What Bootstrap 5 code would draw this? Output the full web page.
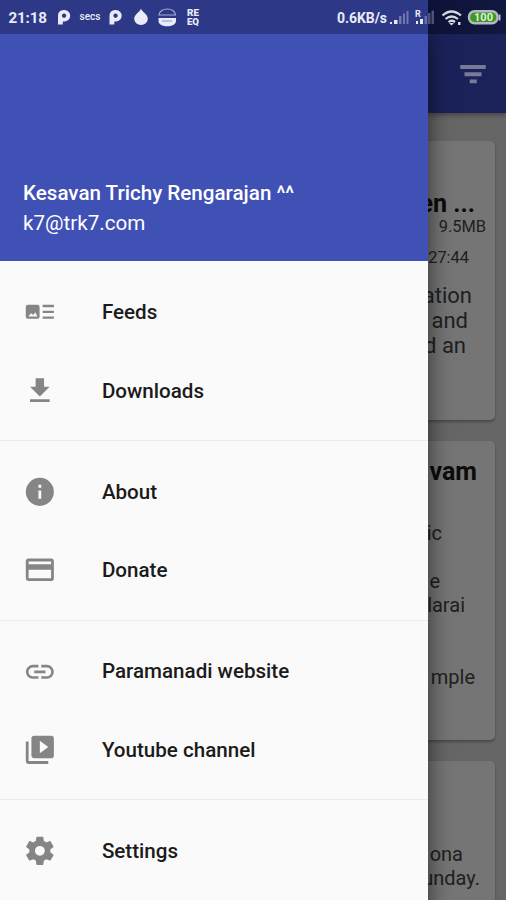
<!DOCTYPE html>
<html lang="en">
<head>
<meta charset="utf-8">
<meta name="viewport" content="width=device-width, initial-scale=1">
<title>Navigation drawer</title>
<link href="https://cdn.jsdelivr.net/npm/bootstrap@5.3.0/dist/css/bootstrap.min.css" rel="stylesheet">
<style>
body{font-family:Roboto,"Noto Sans",sans-serif;background:#666;color:#111;overflow:hidden}
.screen{width:506px;height:900px}
.status{height:34px;background:linear-gradient(90deg,#2d3986 428px,#0c1137 428px,#12183f);color:#e9ebf8;font-weight:500;font-size:15px;line-height:34px}
.status svg,.menu-row svg{display:block;flex:none}
.drawer{width:428px;background:#fafafa;box-shadow:0 0 22px rgba(0,0,0,.6);z-index:2}
.account{height:227px;background:#3f51b5;color:#fff;font-size:20.6px;line-height:30px;padding:0 23px 23.5px}
.account .name,.menu-row{font-weight:500}
.menu-group{padding:11.5px 0 9.9px;border-bottom:1.4px solid #ebebeb}
.menu-group:last-child{border:0}
.menu-row{height:78.7px;padding-left:23px;gap:45.2px;font-size:20.6px;color:#1b1b1b}
.menu-row span{padding-top:1px}
.menu-row svg{width:33.7px;height:33.7px;fill:#858585}
.backdrop-pane{width:78px}
.appbar{height:79px;background:#1b225a;box-shadow:0 2px 5px rgba(0,0,0,.35);padding-right:16px}
.appbar svg{width:34px;height:34px;fill:#777b99}
.feed-card{width:67px;background:#757575;border-radius:0 5px 5px 0;box-shadow:0 2px 3px rgba(0,0,0,.3);overflow:hidden;margin-bottom:21px}
.c1{height:279px;margin-top:28px;padding-top:48px}
.c2{height:299px;padding-top:16px}
.c3{height:160px;padding-top:81px;margin:0}
.ln{display:flex;justify-content:flex-end;white-space:nowrap;line-height:24px;height:24px;font-size:20px;color:#202020}
.ln.desc{font-size:22px;height:25px;line-height:25px}
.ln.head{font-size:25px;font-weight:700;height:30px;line-height:30px;color:#0c0c0c}
.ln.meta{font-size:16.4px;height:16px;line-height:16px}
.r9{padding-right:9px}.r15{padding-right:15px}.r18{padding-right:18px}.r20{padding-right:20px}.r23{padding-right:23px}.r26{padding-right:26px}.r27{padding-right:27px}.r29{padding-right:29px}.r30{padding-right:30px}.r32{padding-right:32px}.r53{padding-right:53px}.r55{padding-right:55px}
.gap-date{margin-top:15px}.gap-desc{margin-top:17px}.gap-a{margin-top:34px}.gap-b{margin-top:24px}.gap-c{margin-top:48px}
</style>
<script src="https://cdn.jsdelivr.net/npm/bootstrap@5.3.0/dist/js/bootstrap.bundle.min.js"></script>
</head>
<body>
<div class="screen d-flex flex-column overflow-hidden">
  <header class="status position-relative z-3">
    <svg width="506" height="34" viewBox="0 0 506 34" font-family="Roboto" font-weight="500" fill="#e9ebf8">
      <text x="8.500" y="23.300" font-size="15.200" font-weight="700" textLength="38.500">21:18</text>
      <g id="parking"><path fill-rule="evenodd" d="M58 15.500a5.500 5.500 0 0 1 5.500-5.500h1a5.700 5.700 0 0 1 0 11.400h-1.700V24.500H58zM64 13.500a2.200 2.200 0 1 0 .1 0z"/></g>
      <use href="#parking" x="51.500"/>
      <text x="79.500" y="20.300" font-size="10" font-weight="500" textLength="21" lengthAdjust="spacingAndGlyphs">secs</text>
      <path d="M141 8.500c.7 3.500 6.800 5 6.800 10.500a6.800 6 0 0 1-13.600 0c0-5 6-7 6.800-10.500z"/>
      <path d="M159 15c.5-8 16-8 16.500 0z" fill="none" stroke="#a6add8" stroke-width="1.200"/><path d="M158.500 18h17.500v3c0 7-17.500 7-17.500 0z"/><path d="M162 21h10" stroke="#8b94c4"/>
      <text x="187" y="16" font-size="9.500" font-weight="900" textLength="12" lengthAdjust="spacingAndGlyphs">RE</text>
      <text x="187" y="25" font-size="9.500" font-weight="900" textLength="12" lengthAdjust="spacingAndGlyphs">EQ</text>
      <text x="337" y="22.500" font-size="14" font-weight="700" textLength="50">0.6KB/s</text>
      <path d="M390 24v-2h2v2zM394 24v-4h3.500v4z"/>
      <path d="M399 24v-8h2.500v8zM403 24V13.500h2V24zM406.500 24V11h2v13z" opacity=".35"/>
      <text x="415" y="17" font-size="9" font-weight="700">R</text>
      <path d="M416 24v-3h2v3zM420 24v-5h3v5z"/>
      <path d="M424.500 24v-8h2.500v8zM428 24V13h2.500v11zM431.500 24V10.500h2.500V24z" opacity=".3"/>
      <g fill="none" stroke="#d5d7df" stroke-width="2.200"><path d="M442.500 15.500q9-8 18.500 0M445.500 19q6-5 12.500 0M448.500 22q3-2.500 6.500 0"/></g>
      <path d="M449 23h5l-2.500 2.500zM458 25v-3h2.500v3z" fill="#d5d7df"/>
      <rect x="469" y="11.200" width="28.500" height="12" rx="5.500" fill="#3c9a22" stroke="#b6b9c4" stroke-width="2.400"/><path d="M499.500 14.500v6" stroke="#b6b9c4" stroke-width="2"/>
      <text x="474" y="21.300" font-size="11.500" font-weight="700" textLength="19" lengthAdjust="spacingAndGlyphs" fill="#dff0d8">100</text>
    </svg>
  </header>
  <div class="d-flex flex-grow-1">
    <nav class="drawer position-relative flex-shrink-0">
      <div class="account d-flex flex-column justify-content-end">
        <div class="name">Kesavan Trichy Rengarajan ^^</div>
        <div>k7@trk7.com</div>
      </div>
      <div class="menu-group">
        <div class="menu-row d-flex align-items-center"><svg viewBox="0 0 24 24"><path fill-rule="evenodd" d="M3.500 7H10.300Q11.800 7 11.800 8.500V15.500Q11.800 17 10.300 17H3.500Q2 17 2 15.500V8.500Q2 7 3.500 7zM3.700 15.300H10.300L8.700 12.300 7.300 14.200 5.800 13z"/><path d="M14 7h8v1.700h-8zM14 11.200h8v1.700h-8zM14 15.300h8v1.700h-8z"/></svg><span>Feeds</span></div>
        <div class="menu-row d-flex align-items-center"><svg viewBox="0 0 24 24"><path d="M19 9h-4V3H9v6H5l7 7zM5 18v2h14v-2z"/></svg><span>Downloads</span></div>
      </div>
      <div class="menu-group">
        <div class="menu-row d-flex align-items-center"><svg viewBox="0 0 24 24"><path d="M12 2a10 10 0 1 0 0 20 10 10 0 0 0 0-20zm1 15h-2v-6h2zm0-8h-2V7h2z"/></svg><span>About</span></div>
        <div class="menu-row d-flex align-items-center"><svg viewBox="0 0 24 24"><path d="M20 4H4a2 2 0 0 0-2 2v12c0 1.100.9 2 2 2h16a2 2 0 0 0 2-2V6a2 2 0 0 0-2-2zm0 14H4v-6h16zm0-10H4V6h16z"/></svg><span>Donate</span></div>
      </div>
      <div class="menu-group">
        <div class="menu-row d-flex align-items-center"><svg viewBox="0 0 24 24"><path d="M3.900 12c0-1.710 1.390-3.100 3.100-3.100h4V7H7a5 5 0 0 0 0 10h4v-1.900H7A3.100 3.100 0 0 1 3.900 12zM8 13h8v-2H8zm9-6h-4v1.900h4a3.100 3.100 0 0 1 0 6.200h-4V17h4a5 5 0 0 0 0-10z"/></svg><span>Paramanadi website</span></div>
        <div class="menu-row d-flex align-items-center"><svg viewBox="0 0 24 24"><path d="M4 6H2v14a2 2 0 0 0 2 2h14v-2H4zm16-4H8a2 2 0 0 0-2 2v12c0 1.100.9 2 2 2h12a2 2 0 0 0 2-2V4a2 2 0 0 0-2-2zm-8 12.500v-9l6 4.500z"/></svg><span>Youtube channel</span></div>
      </div>
      <div class="menu-group">
        <div class="menu-row d-flex align-items-center"><svg viewBox="0 0 24 24"><path d="M19.430 12.980c.04-.32.07-.64.07-.98s-.03-.66-.07-.98l2.110-1.650c.19-.15.24-.42.12-.64l-2-3.460c-.12-.22-.39-.3-.61-.22l-2.490 1c-.52-.4-1.080-.73-1.690-.98l-.38-2.650A.488.488 0 0 0 14 2h-4c-.25 0-.46.18-.49.42l-.38 2.650c-.61.25-1.170.59-1.690.98l-2.490-1c-.23-.09-.49 0-.61.22l-2 3.460c-.13.22-.07.49.12.64l2.110 1.650c-.04.32-.07.65-.07.98s.03.66.07.98l-2.110 1.650c-.19.15-.24.42-.12.64l2 3.460c.12.22.39.3.61.22l2.490-1c.52.4 1.080.73 1.690.98l.38 2.650c.03.24.24.42.49.42h4c.25 0 .46-.18.49-.42l.38-2.650c.61-.25 1.170-.59 1.690-.98l2.490 1c.23.09.49 0 .61-.22l2-3.460c.12-.22.07-.49-.12-.64zM12 15.500a3.500 3.500 0 1 1 0-7 3.500 3.500 0 0 1 0 7z"/></svg><span>Settings</span></div>
      </div>
    </nav>
    <main class="backdrop-pane">
      <div class="appbar d-flex align-items-center justify-content-end"><svg viewBox="0 0 24 24"><path d="M9.700 18.500h5v-2.700h-5zM3 5.700v2.700h18V5.700zm3 7.800h12v-2.700H6z"/></svg></div>
      <article class="feed-card c1">
        <div class="ln head r20">en ...</div>
        <div class="ln meta r9">9.5MB</div>
        <div class="ln meta r26 gap-date">27:44</div>
        <div class="ln desc r23 gap-desc">ation</div>
        <div class="ln desc r27">and</div>
        <div class="ln desc r29">d an</div>
      </article>
      <article class="feed-card c2">
        <div class="ln head r18">vam</div>
        <div class="ln r53 gap-a">ic</div>
        <div class="ln r55 gap-b">e</div>
        <div class="ln r30">larai</div>
        <div class="ln r20 gap-c">mple</div>
      </article>
      <article class="feed-card c3">
        <div class="ln r32">ona</div>
        <div class="ln r15">unday.</div>
      </article>
    </main>
  </div>
</div>
</body>
</html>
